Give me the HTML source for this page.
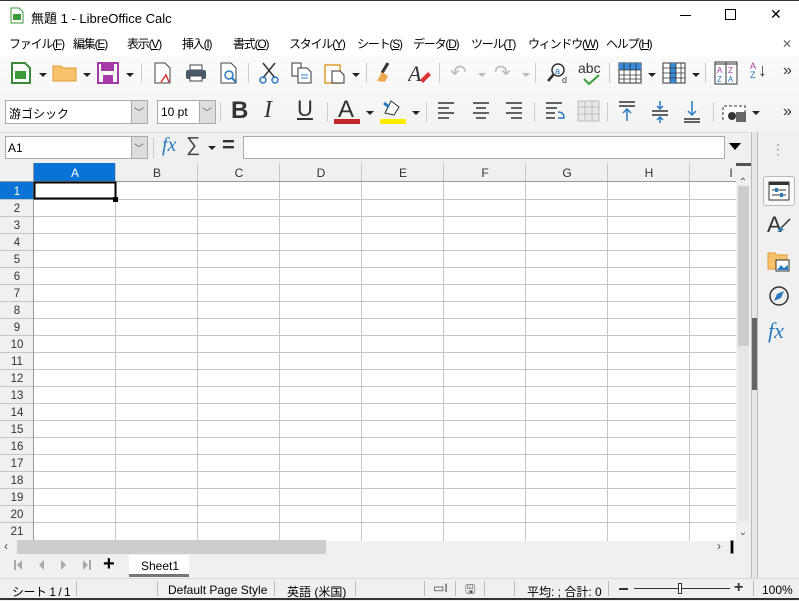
<!DOCTYPE html>
<html><head><meta charset="utf-8"><style>
*{box-sizing:border-box;margin:0;padding:0}
body{width:799px;height:600px;overflow:hidden;background:#f0f0f0;font-family:"Liberation Sans","Noto Sans CJK JP",sans-serif;font-size:12px;color:#000;position:relative}
.a{position:absolute}
.t{white-space:nowrap}
.m{font-size:12px;letter-spacing:-1.2px;top:35px}
.sep{position:absolute;width:1px;height:20px;background:#ccc}
.dd{position:absolute;width:0;height:0;border-left:4px solid transparent;border-right:4px solid transparent;border-top:4px solid #222}
</style></head><body>
<div class="a" style="left:0;top:0;width:799px;height:31px;background:#fff"></div>
<div class="a" style="left:0;top:0;width:799px;height:1px;background:#333"></div>
<svg class="a" style="left:10px;top:7px" width="14" height="17"><path d="M1 1h8l4 4v11H1z" fill="#fff" stroke="#3a9a3a"/><rect x="3" y="7" width="8" height="6" fill="#3a9a3a"/></svg>
<div class="a t" style="left:31px;top:8px;font-size:13px">無題 1 - LibreOffice Calc</div>
<div class="a" style="left:680px;top:15px;width:11px;height:1px;background:#000"></div>
<div class="a" style="left:725px;top:9px;width:11px;height:11px;border:1px solid #000"></div>
<div class="a t" style="left:770px;top:6px;font-size:14px">✕</div>
<div class="a" style="left:0;top:31px;width:799px;height:25px;background:#fff"></div>
<div class="a t m" style="left:9px">ファイル(<u>F</u>)</div>
<div class="a t m" style="left:73px">編集(<u>E</u>)</div>
<div class="a t m" style="left:127px">表示(<u>V</u>)</div>
<div class="a t m" style="left:182px">挿入(<u>I</u>)</div>
<div class="a t m" style="left:233px">書式(<u>O</u>)</div>
<div class="a t m" style="left:289px">スタイル(<u>Y</u>)</div>
<div class="a t m" style="left:357px">シート(<u>S</u>)</div>
<div class="a t m" style="left:413px">データ(<u>D</u>)</div>
<div class="a t m" style="left:471px">ツール(<u>T</u>)</div>
<div class="a t m" style="left:528px">ウィンドウ(<u>W</u>)</div>
<div class="a t m" style="left:606px">ヘルプ(<u>H</u>)</div>
<div class="a t" style="left:782px;top:37px;color:#666;font-size:12px">✕</div>
<div class="a" style="left:0;top:56px;width:799px;height:76px;background:linear-gradient(#fbfbfb,#f2f2f2)"></div>
<svg class="a" style="left:10px;top:61px" width="22" height="24"><path d="M2 2h13l5 5v15H2z" fill="#fff" stroke="#3a8a3a" stroke-width="2"/><rect x="5" y="10" width="11" height="8" fill="#3a9a3a"/></svg>
<div class="dd" style="left:39px;top:73px"></div>
<svg class="a" style="left:52px;top:64px" width="26" height="18"><path d="M1 2h8l2 2h13v13H1z" fill="#f7c26b" stroke="#e09a30"/></svg>
<div class="dd" style="left:83px;top:73px"></div>
<svg class="a" style="left:97px;top:62px" width="22" height="22"><rect x="1" y="1" width="20" height="20" fill="#fff" stroke="#a63aa6" stroke-width="2"/><rect x="4" y="2" width="13" height="7" fill="#a63aa6"/><rect x="6" y="13" width="10" height="7" fill="#a63aa6"/></svg>
<div class="dd" style="left:126px;top:73px"></div>
<div class="sep" style="left:141px;top:63px"></div>
<svg class="a" style="left:153px;top:62px" width="20" height="22"><path d="M2 1h10l5 5v15H2z" fill="#fff" stroke="#444"/><path d="M8 20l5-7 3 7" fill="none" stroke="#d33" stroke-width="1.5"/></svg>
<svg class="a" style="left:185px;top:64px" width="22" height="18"><rect x="5" y="1" width="12" height="5" fill="#fff" stroke="#444"/><rect x="1" y="6" width="20" height="9" rx="2" fill="#4a5a6a"/><rect x="5" y="12" width="12" height="5" fill="#fff" stroke="#444"/></svg>
<svg class="a" style="left:219px;top:62px" width="20" height="22"><path d="M2 1h10l5 5v15H2z" fill="#fff" stroke="#444"/><circle cx="10" cy="13" r="4" fill="none" stroke="#2a7ac0" stroke-width="1.5"/><path d="M13 16l4 4" stroke="#2a7ac0" stroke-width="2"/></svg>
<div class="sep" style="left:248px;top:63px"></div>
<svg class="a" style="left:258px;top:62px" width="22" height="22"><path d="M5 1l12 15M17 1L5 16" stroke="#333" stroke-width="1.5"/><circle cx="5" cy="18" r="3" fill="none" stroke="#2a7ac0" stroke-width="1.5"/><circle cx="17" cy="18" r="3" fill="none" stroke="#2a7ac0" stroke-width="1.5"/></svg>
<svg class="a" style="left:291px;top:62px" width="22" height="22"><path d="M1 1h9v13H1z" fill="#fff" stroke="#333"/><path d="M7 6h9l4 4v11H7z" fill="#fff" stroke="#333"/><path d="M10 13h7M10 16h7" stroke="#2a7ac0"/></svg>
<svg class="a" style="left:324px;top:62px" width="22" height="22"><rect x="1" y="3" width="15" height="18" fill="#fff" stroke="#e09a30" stroke-width="1.5"/><path d="M8 9h8l4 4v8H8z" fill="#fff" stroke="#333"/></svg>
<div class="dd" style="left:352px;top:73px"></div>
<div class="sep" style="left:366px;top:63px"></div>
<svg class="a" style="left:374px;top:61px" width="22" height="24"><path d="M14 2L8 12" stroke="#333" stroke-width="3"/><path d="M3 20l5-9 6 4-3 6z" fill="#f0a850"/></svg>
<svg class="a" style="left:408px;top:62px" width="24" height="22"><text x="0" y="19" font-size="22" font-family="Liberation Serif" font-style="italic" fill="#333">A</text><path d="M12 18l8-8 3 3-8 8z" fill="#d33"/></svg>
<div class="sep" style="left:439px;top:63px"></div>
<div class="a t" style="left:450px;top:60px;font-size:20px;color:#bbb">↶</div><div class="dd" style="left:478px;top:73px;border-top-color:#bbb"></div>
<div class="a t" style="left:494px;top:60px;font-size:20px;color:#bbb">↷</div><div class="dd" style="left:522px;top:73px;border-top-color:#bbb"></div>
<div class="sep" style="left:535px;top:63px"></div>
<svg class="a" style="left:546px;top:62px" width="24" height="22"><circle cx="12" cy="8" r="6" fill="none" stroke="#333" stroke-width="1.5"/><path d="M8 12l-6 7" stroke="#333" stroke-width="2.5"/><text x="9" y="12" font-size="9" fill="#2a7ac0">a</text><text x="16" y="21" font-size="9" fill="#333">d</text></svg>
<div class="a t" style="left:578px;top:60px;font-size:14px;color:#333">abc</div>
<svg class="a" style="left:582px;top:74px" width="20" height="12"><path d="M2 5l5 5 10-9" fill="none" stroke="#3aa03a" stroke-width="2"/></svg>
<div class="sep" style="left:609px;top:63px"></div>
<svg class="a" style="left:618px;top:62px" width="24" height="22"><rect x="1" y="1" width="22" height="20" fill="#fff" stroke="#333"/><rect x="1" y="1" width="22" height="7" fill="#3a8ad8"/><path d="M1 8h22M1 13h22M1 17h22M6 1v20M12 1v20M18 1v20" stroke="#333" stroke-width=".8"/></svg>
<div class="dd" style="left:648px;top:73px"></div>
<svg class="a" style="left:662px;top:62px" width="24" height="22"><rect x="1" y="1" width="22" height="20" fill="#fff" stroke="#333"/><rect x="8" y="1" width="6" height="20" fill="#3a8ad8"/><path d="M1 6h22M1 11h22M1 16h22M8 1v20M14 1v20M19 1v20" stroke="#333" stroke-width=".8"/></svg>
<div class="dd" style="left:692px;top:73px"></div>
<div class="sep" style="left:705px;top:63px"></div>
<svg class="a" style="left:714px;top:61px" width="24" height="24"><rect x="1" y="1" width="22" height="22" fill="#fff" stroke="#333"/><path d="M12 1v22M1 3h22" stroke="#333"/><text x="3" y="12" font-size="8" fill="#a63aa6">A</text><text x="3" y="21" font-size="8" fill="#2a7ac0">Z</text><text x="14" y="12" font-size="8" fill="#a63aa6">Z</text><text x="14" y="21" font-size="8" fill="#2a7ac0">A</text></svg>
<div class="a t" style="left:750px;top:62px;font-size:9px;color:#a63aa6;line-height:9px">A<br><span style="color:#2a7ac0">Z</span></div>
<div class="a t" style="left:758px;top:60px;font-size:18px;color:#333">↓</div>
<div class="a t" style="left:783px;top:62px;font-size:16px;color:#333">»</div>
<div class="a" style="left:5px;top:100px;width:143px;height:24px;background:#fff;border:1px solid #aaa"></div>
<div class="a t" style="left:9px;top:105px">游ゴシック</div>
<div class="a" style="left:131px;top:101px;width:16px;height:22px;background:#ddd;border-left:1px solid #aaa"></div>
<div class="a t" style="left:134px;top:104px;font-size:10px;color:#555">﹀</div>
<div class="a" style="left:157px;top:100px;width:59px;height:24px;background:#fff;border:1px solid #aaa"></div>
<div class="a t" style="left:161px;top:105px">10 pt</div>
<div class="a" style="left:199px;top:101px;width:16px;height:22px;background:#ddd;border-left:1px solid #aaa"></div>
<div class="a t" style="left:202px;top:104px;font-size:10px;color:#555">﹀</div>
<div class="sep" style="left:220px;top:102px"></div>
<div class="a t" style="left:231px;top:97px;font-size:24px;font-weight:bold;color:#333">B</div>
<div class="a t" style="left:264px;top:97px;font-size:24px;font-family:'Liberation Serif';font-style:italic;color:#333">I</div>
<div class="a t" style="left:297px;top:96px;font-size:22px;color:#333;text-decoration:underline">U</div>
<div class="sep" style="left:327px;top:102px"></div>
<div class="a t" style="left:338px;top:96px;font-size:24px;color:#333">A</div>
<div class="a" style="left:334px;top:119px;width:26px;height:5px;background:#c0282a"></div>
<div class="dd" style="left:366px;top:111px"></div>
<svg class="a" style="left:381px;top:99px" width="24" height="18"><path d="M4 14l6-12 8 6-5 8z" fill="#fff" stroke="#333"/><path d="M3 4l5 4" stroke="#2a7ac0" stroke-width="3"/></svg>
<div class="a" style="left:380px;top:119px;width:26px;height:5px;background:#ffeb00"></div>
<div class="dd" style="left:412px;top:111px"></div>
<div class="sep" style="left:426px;top:102px"></div>
<svg class="a" style="left:436px;top:100px" width="110" height="22" stroke="#333" stroke-width="1.5"><path d="M2 3h16M2 8h11M2 13h16M2 18h11"/><path d="M37 3h16M40 8h10M37 13h16M40 18h10"/><path d="M70 3h16M75 8h11M70 13h16M75 18h11"/></svg>
<div class="sep" style="left:534px;top:102px"></div>
<svg class="a" style="left:544px;top:100px" width="24" height="22"><path d="M2 3h16M2 8h11M2 13h9M2 18h9" stroke="#333" stroke-width="1.5"/><path d="M14 12q6 0 6 6h-6" fill="none" stroke="#2a7ac0" stroke-width="1.5"/></svg>
<svg class="a" style="left:577px;top:100px" width="24" height="22"><rect x="1" y="1" width="21" height="20" fill="#e8e8e8" stroke="#bbb"/><path d="M1 7h21M1 14h21M8 1v20M15 1v20" stroke="#bbb"/></svg>
<div class="sep" style="left:607px;top:102px"></div>
<svg class="a" style="left:617px;top:100px" width="90" height="24" stroke-width="1.5"><path d="M2 2h16M2 6h16" stroke="#333"/><path d="M10 21V9M6 13l4-4 4 4" stroke="#2a7ac0" fill="none"/><path d="M35 11h16M35 15h16" stroke="#333"/><path d="M43 1v8M40 6l3 3 3-3M43 23v-6M40 20l3-3 3 3" stroke="#2a7ac0" fill="none"/><path d="M67 19h16M67 22h16" stroke="#333"/><path d="M75 1v14M71 11l4 4 4-4" stroke="#2a7ac0" fill="none"/></svg>
<div class="sep" style="left:713px;top:102px"></div>
<svg class="a" style="left:722px;top:101px" width="26" height="22"><path d="M1 19V5h22v14" fill="#fff" stroke="#333" stroke-dasharray="3 2"/><circle cx="10" cy="15" r="4" fill="#333"/><rect x="14" y="11" width="10" height="10" fill="#666"/></svg>
<div class="dd" style="left:752px;top:111px"></div>
<div class="a t" style="left:783px;top:103px;font-size:16px;color:#333">»</div>
<div class="a" style="left:0;top:132px;width:750px;height:1px;background:#ddd"></div>
<div class="a" style="left:5px;top:136px;width:143px;height:23px;background:#fff;border:1px solid #aaa"></div>
<div class="a t" style="left:8px;top:141px">A1</div>
<div class="a" style="left:131px;top:137px;width:16px;height:21px;background:#ddd;border-left:1px solid #aaa"></div>
<div class="a t" style="left:134px;top:140px;font-size:10px;color:#555">﹀</div>
<div class="sep" style="left:153px;top:138px"></div>
<div class="a t" style="left:162px;top:134px;font-size:20px;font-family:'Liberation Serif';font-style:italic;color:#2a7ac0">fx</div>
<div class="a t" style="left:186px;top:134px;font-size:20px;color:#444">∑</div>
<div class="dd" style="left:208px;top:146px"></div>
<div class="a t" style="left:222px;top:132px;font-size:22px;color:#333;font-weight:bold">=</div>
<div class="a" style="left:243px;top:136px;width:482px;height:23px;background:#fff;border:1px solid #aaa"></div>
<div class="a" style="left:729px;top:143px;border-left:6px solid transparent;border-right:6px solid transparent;border-top:7px solid #000"></div>
<svg class="a" style="left:0;top:163px" width="751" height="378">
<rect x="0" y="0" width="736" height="378" fill="#fff"/>
<rect x="0" y="0" width="736" height="19" fill="#f0f0f0"/>
<rect x="0" y="0" width="34" height="378" fill="#f0f0f0"/>
<rect x="34" y="0" width="82" height="19" fill="#0a74d6"/>
<rect x="0" y="19" width="34" height="17" fill="#0a74d6"/>
<g stroke="#c6c6c6" stroke-width="1">
<path d="M115.5 0v378M197.5 0v378M279.5 0v378M361.5 0v378M443.5 0v378M525.5 0v378M607.5 0v378M689.5 0v378"/>
<path d="M0 36.5h736M0 53.5h736M0 70.5h736M0 87.5h736M0 104.5h736M0 121.5h736M0 138.5h736M0 155.5h736M0 172.5h736M0 189.5h736M0 206.5h736M0 223.5h736M0 240.5h736M0 257.5h736M0 274.5h736M0 291.5h736M0 308.5h736M0 325.5h736M0 342.5h736M0 359.5h736"/>
</g>
<path d="M0 18.5h736M33.5 0v378" stroke="#999"/>
<rect x="34.5" y="19.5" width="81" height="16" fill="none" stroke="#000" stroke-width="2"/>
<rect x="113" y="34" width="5" height="5" fill="#000"/>
<g font-family="Liberation Sans" font-size="12" text-anchor="middle" fill="#333">
<text x="75" y="14" fill="#fff">A</text><text x="157" y="14">B</text><text x="239" y="14">C</text><text x="321" y="14">D</text><text x="403" y="14">E</text><text x="485" y="14">F</text><text x="567" y="14">G</text><text x="649" y="14">H</text><text x="731" y="14">I</text>
</g>
<g font-family="Liberation Sans" font-size="11.5" text-anchor="middle" fill="#333">
<text x="17" y="32" fill="#fff">1</text><text x="17" y="49">2</text><text x="17" y="66">3</text><text x="17" y="83">4</text><text x="17" y="100">5</text><text x="17" y="117">6</text><text x="17" y="134">7</text><text x="17" y="151">8</text><text x="17" y="168">9</text><text x="17" y="185">10</text><text x="17" y="202">11</text><text x="17" y="219">12</text><text x="17" y="236">13</text><text x="17" y="253">14</text><text x="17" y="270">15</text><text x="17" y="287">16</text><text x="17" y="304">17</text><text x="17" y="321">18</text><text x="17" y="338">19</text><text x="17" y="355">20</text><text x="17" y="372">21</text>
</g>
<rect x="736" y="0" width="15" height="378" fill="#f0f0f0"/>
<rect x="736" y="0" width="15" height="3" fill="#555"/>
<rect x="738" y="23" width="11" height="160" fill="#cdcdcd"/>
<rect x="738" y="183" width="11" height="175" fill="#e6e6e6"/>
<text x="743" y="22" font-size="10" text-anchor="middle" fill="#555">⌃</text>
<text x="743" y="372" font-size="10" text-anchor="middle" fill="#555">⌄</text>
</svg>
<div class="a" style="left:751px;top:132px;width:7px;height:446px;background:#e6e6e6;border-left:1px solid #bbb;border-right:1px solid #bbb"></div>
<div class="a" style="left:752px;top:318px;width:5px;height:72px;background:#666"></div>
<div class="a" style="left:758px;top:132px;width:41px;height:446px;background:#f0f0f0"></div>
<div class="a t" style="left:776px;top:142px;color:#666;font-size:12px;line-height:5px">·<br>·<br>·</div>
<div class="a" style="left:763px;top:176px;width:32px;height:30px;border:1px solid #bbb;border-radius:3px;background:#f8f8f8"></div>
<svg class="a" style="left:768px;top:181px" width="22" height="20"><rect x="1" y="1" width="20" height="18" fill="#fff" stroke="#333"/><rect x="1" y="1" width="20" height="3" fill="#333"/><path d="M4 9h14M4 14h14" stroke="#333"/><rect x="7" y="7" width="3" height="4" fill="#2a7ac0"/><rect x="12" y="12" width="3" height="4" fill="#2a7ac0"/></svg>
<div class="a t" style="left:767px;top:212px;font-size:22px;color:#333">A</div>
<svg class="a" style="left:776px;top:218px" width="16" height="16"><path d="M14 1L5 10" stroke="#333" stroke-width="1.5"/><path d="M1 14l4-5 3 3z" fill="#2a7ac0"/></svg>
<svg class="a" style="left:767px;top:250px" width="24" height="22"><path d="M1 3h7l2 2h10v14H1z" fill="#f7c26b" stroke="#e09a30"/><rect x="9" y="10" width="13" height="11" fill="#fff" stroke="#333"/><path d="M10 20l4-5 3 3 4-3v5z" fill="#2a7ac0"/></svg>
<svg class="a" style="left:768px;top:285px" width="22" height="22"><circle cx="11" cy="11" r="9" fill="none" stroke="#333" stroke-width="1.5"/><path d="M6 16l3-7 7-3-3 7z" fill="#2a7ac0"/></svg>
<div class="a t" style="left:768px;top:318px;font-size:22px;font-family:'Liberation Serif';font-style:italic;color:#2a7ac0">fx</div>
<div class="a" style="left:0;top:541px;width:751px;height:37px;background:#f0f0f0"></div>
<div class="a" style="left:17px;top:540px;width:309px;height:14px;background:#cdcdcd"></div>
<div class="a t" style="left:4px;top:539px;font-size:12px;color:#444">‹</div>
<div class="a t" style="left:717px;top:539px;font-size:12px;color:#444">›</div>
<div class="a" style="left:730px;top:540px;width:4px;height:14px;background:#999"></div>
<div class="a" style="left:731px;top:541px;width:2px;height:12px;background:#000"></div>
<svg class="a" style="left:13px;top:559px" width="80" height="12" fill="#aaa"><rect x="1" y="1" width="2" height="10"/><path d="M9 1v10l-5-5z"/><path d="M31 1v10l-5-5z"/><path d="M48 1v10l5-5z"/><path d="M70 1v10l5-5z"/><rect x="76" y="1" width="2" height="10"/></svg>
<div class="a t" style="left:103px;top:553px;font-size:20px;font-weight:bold">+</div>
<div class="a" style="left:129px;top:555px;width:60px;height:22px;background:#fff;border-bottom:3px solid #777"></div>
<div class="a t" style="left:141px;top:559px">Sheet1</div>
<div class="a" style="left:0;top:578px;width:799px;height:20px;background:#f0f0f0;border-top:1px solid #d8d8d8"></div>
<div class="a" style="left:0;top:598px;width:799px;height:2px;background:#333"></div>
<div class="a t" style="left:12px;top:583px;letter-spacing:-0.5px">シート 1 / 1</div>
<div class="a t" style="left:168px;top:583px">Default Page Style</div>
<div class="a t" style="left:287px;top:583px">英語 (米国)</div>
<div class="a t" style="left:527px;top:583px">平均: ; 合計: 0</div>
<div class="a t" style="left:762px;top:583px">100%</div>
<div class="a t" style="left:433px;top:581px;font-size:12px;color:#444">▭I</div>
<div class="a t" style="left:465px;top:580px;font-size:12px;color:#444">🖫</div>
<div class="a" style="left:76px;top:581px;width:1px;height:15px;background:#bbb"></div>
<div class="a" style="left:157px;top:581px;width:1px;height:15px;background:#bbb"></div>
<div class="a" style="left:274px;top:581px;width:1px;height:15px;background:#bbb"></div>
<div class="a" style="left:355px;top:581px;width:1px;height:15px;background:#bbb"></div>
<div class="a" style="left:424px;top:581px;width:1px;height:15px;background:#bbb"></div>
<div class="a" style="left:455px;top:581px;width:1px;height:15px;background:#bbb"></div>
<div class="a" style="left:484px;top:581px;width:1px;height:15px;background:#bbb"></div>
<div class="a" style="left:514px;top:581px;width:1px;height:15px;background:#bbb"></div>
<div class="a" style="left:608px;top:581px;width:1px;height:15px;background:#bbb"></div>
<div class="a" style="left:753px;top:581px;width:1px;height:15px;background:#bbb"></div>
<div class="a" style="left:619px;top:588px;width:9px;height:2px;background:#333"></div>
<div class="a" style="left:634px;top:588px;width:96px;height:1px;background:#333"></div>
<div class="a" style="left:678px;top:583px;width:4px;height:11px;background:#fff;border:1px solid #333"></div>
<div class="a t" style="left:734px;top:579px;font-size:16px;font-weight:bold;color:#333">+</div>
</body></html>
